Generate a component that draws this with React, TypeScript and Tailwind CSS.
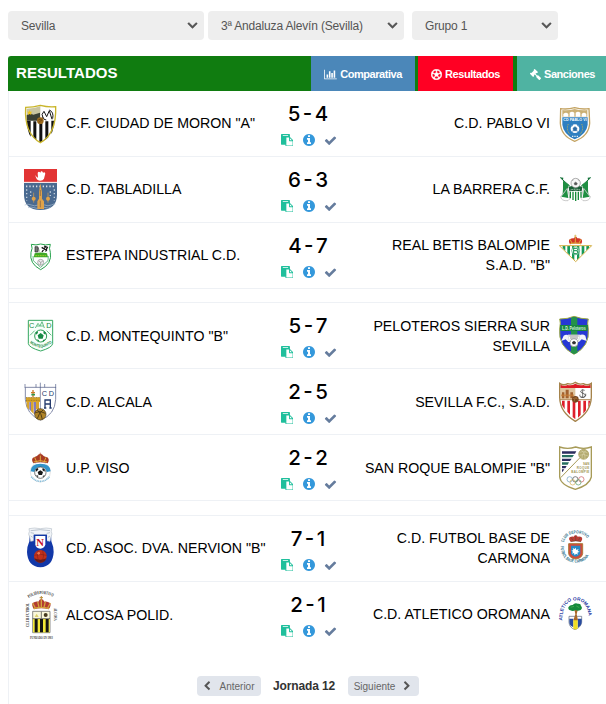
import React from 'react';
import { FaGavel, FaRegFutbol, FaChevronDown } from 'react-icons/fa';

function CrestBox({ viewBox, children }: { viewBox: string; children: React.ReactNode }) {
  return (
    <svg viewBox={viewBox} className="w-10 h-12 shrink-0 overflow-visible">
      {children}
    </svg>
  );
}

function Moron() {
  return (
    <CrestBox viewBox="60 30 120 144">
      <path d="M77 52 Q100 52 121 46 Q144 52 167 50 Q170 130 121 158 Q72 130 77 52Z" fill="#fff" />
      <path d="M81 92h11v48q-10-14-11-48zM100 94h9v56l-9-7zM118 96h9v60h-9zM136 94h9v48l-9 8zM154 92h8q-1 26-8 40z" fill="#111" />
      <path d="M80 56q22 0 41-7v42H80z" fill="#c9c4a0" />
      <path d="M80 76l10-6 10 4 20-6v24H80z" fill="#3b4034" />
      <path d="M89 60l2 5 6 0-4 4 1 6-5-3-5 3 1-6-4-4 6 0z" fill="#f0c419" />
      <path d="M129 84q-7-12 3-20l8 16 8-18 8 26M148 60q14 6 10 26M139 90q-8 0-10-8" fill="none" stroke="#151515" strokeWidth="3" />
      <circle cx="121" cy="92" r="10" fill="#9b6a1d" />
      <path d="M115 90q6-6 12 2M116 98q6-6 9-8" stroke="#5f3d0d" strokeWidth="2" fill="none" />
      <path d="M77 52 Q100 52 121 46 Q144 52 167 50 Q170 130 121 158 Q72 130 77 52Z" fill="none" stroke="#c9b52a" strokeWidth="4" />
    </CrestBox>
  );
}

function Tabladilla() {
  return (
    <CrestBox viewBox="60 228 120 144">
      <path d="M72 279h99v35q0 45-50 46-49-1-49-46z" fill="#4a6a90" />
      <path d="M72 237h99v39H72z" fill="#e23434" />
      <path d="M72 277h99" stroke="#f7dede" strokeWidth="3" />
      <path d="M106 255q4 8 8 8l-1-14q3-7 8-1l2-4q5-2 6 4l5-1q4 3 0 11l-2 8q-3 6-12 6-12 0-14-17z" fill="#fff" />
      <path d="M78 289h86" stroke="#d5dce4" strokeWidth="5" strokeDasharray="4 6" />
      <path d="M80 298v34M163 298v34M92 304v14M151 304v14" stroke="#c4cfda" strokeWidth="4" strokeDasharray="4 7" />
      <path d="M74 345q10-5 20 0t20 0 20 0 20 0 12-3M84 353q9-4 18 0t18 0 18 0 14-2" stroke="#a9bdd0" strokeWidth="2" fill="none" />
      <path d="M121 280l5 26v20l6 8v23h-20v-23l5-8v-20z" fill="#dfa24a" />
      <path d="M121 300v18M121 332v20" stroke="#795f45" strokeWidth="2" />
      <circle cx="101" cy="326" r="6" fill="#dfa24a" />
      <circle cx="144" cy="326" r="6" fill="#dfa24a" />
      <path d="M101 308v30M144 308v30" stroke="#dfa24a" strokeWidth="2" />
    </CrestBox>
  );
}

function Estepa() {
  return (
    <CrestBox viewBox="60 426 120 144">
      <path d="M94 463q14 4 28-1 14 5 29 1-5 12 0 24 6 34-29 52-35-18-29-52 6-12 1-24z" fill="#fff" stroke="#26a24b" strokeWidth="3" />
      <path d="M104 490q18-5 37 0l3 12h-43z" fill="#3faa27" />
      <path d="M99 498l1 14 22 20 22-20 1-14" fill="none" stroke="#1e9b50" strokeWidth="2" />
      <path d="M105 470h8v16h-8zM115 472l2 13" stroke="#222" strokeWidth="2" fill="#777" />
      <path d="M126 486l12-18M125 472l16 10M132 468l10 4-6 12" stroke="#171717" strokeWidth="4" fill="none" />
      <path d="M106 497h32" stroke="#d0d931" strokeWidth="2" strokeDasharray="5 2" />
      <circle cx="122" cy="517" r="9" fill="#eee" stroke="#8a8a8a" strokeWidth="2" />
      <path d="M117 513l5 4 6-3M122 517v8" stroke="#888" strokeWidth="2" fill="none" />
    </CrestBox>
  );
}

function Montequinto() {
  return (
    <CrestBox viewBox="60 36 120 144">
      <path d="M85 61h73v70q-2 12-36 22-35-10-37-22z" fill="#f7fffa" stroke="#36a861" strokeWidth="3" />
      <text x="87" y="85" fontSize="22" fontFamily="Liberation Sans, sans-serif" fill="#168a43">C</text>
      <text x="139" y="85" fontSize="22" fontFamily="Liberation Sans, sans-serif" fill="#168a43">D</text>
      <path d="M106 84l8-14 6 8 6-13 7 19M110 78h20M90 106l14-14M154 106l-14-14" stroke="#63bd84" strokeWidth="3" fill="none" />
      <circle cx="122" cy="108" r="18" fill="#fff" stroke="#2d9d55" strokeWidth="3" />
      <path d="M122 99l9 7-3 10h-12l-3-10zM106 98l7-5 1 6-6 5zM131 93l7 6-2 5-6-4zM109 118l8 2-1 5zM128 120l8-2-6 7z" fill="#168b44" />
      <path id="montequinto-band" d="M89 128q33 28 67 0" fill="none" />
      <text fontSize="12" fontWeight="bold" fontFamily="Liberation Sans, sans-serif" fill="#168a43">
        <textPath href="#montequinto-band" textLength="74" lengthAdjust="spacingAndGlyphs">MONTEQUINTO</textPath>
      </text>
    </CrestBox>
  );
}

function Alcala() {
  return (
    <CrestBox viewBox="60 234 120 144">
      <path d="M76 262h91v36q-2 46-45 62-43-16-46-62z" fill="#fff" stroke="#6a7497" strokeWidth="2.5" />
      <path d="M75 252v12M108 252v10M121 248v80M134 252v10M167 252v12" stroke="#4e5c86" strokeWidth="2" />
      <path d="M78 292h42v14H78z" fill="#d7a329" />
      <path d="M78 293h42M78 301h42" stroke="#856824" strokeWidth="2" strokeDasharray="3 2" />
      <path d="M80 306h8v24l-8-9zM93 306h8v36l-8-8zM108 306h9v22h-9z" fill="#d8a52e" />
      <path d="M88 306h5v28l-5-6zM101 306h7v36l-6 0z" fill="#817abf" />
      <path d="M99 270v22M93 278h12" stroke="#cc7a2c" strokeWidth="4" />
      <path d="M94 284h11" stroke="#31964c" strokeWidth="5" />
      <text x="125" y="287" fontSize="22" fontFamily="Liberation Sans, sans-serif" fill="#253b6e" textLength="37">CD</text>
      <path d="M135 324v-24h16v24M135 312h16M132 324h7M148 324h7" fill="none" stroke="#253b6e" strokeWidth="4" />
      <circle cx="121" cy="343" r="17" fill="#b08427" stroke="#483815" strokeWidth="2" />
      <path d="M106 338q15-8 30 2M112 330q14 12 15 28M130 329q-14 10-18 27" fill="none" stroke="#3e3013" strokeWidth="2.5" />
    </CrestBox>
  );
}

function Viso() {
  return (
    <CrestBox viewBox="60 432 120 144">
      <circle cx="121" cy="516" r="30" fill="#fff" stroke="#d4d4d4" strokeWidth="2" />
      <path d="M92 514q0-22 29-23 31 1 31 23l-12 2q-3-15-19-15-15 0-18 15z" fill="#3293c9" />
      <path d="M100 490q-7-12-1-17 10-4 12-5 4-6 10-6t10 6q4 3 11 4 8 6 1 18-22-7-43 0z" fill="#a83b24" />
      <path d="M101 486q20-8 40 0M104 472l6 14M121 466v19M138 472l-6 14" fill="none" stroke="#dfac3c" strokeWidth="3" />
      <path d="M121 458v10M117 463h8" stroke="#b04c35" strokeWidth="2" />
      <circle cx="121" cy="518" r="17" fill="#fff" stroke="#333" strokeWidth="2" />
      <path d="M121 511l8 5-3 9h-10l-3-9zM107 508l7-4 1 5-7 6zM128 504l7 5-2 6-6-5zM108 525l7 2-1 5zM128 528l7-3-6 7z" fill="#171717" />
      <path d="M94 530q10 13 27 14 18-1 27-14" fill="none" stroke="#87bfdd" strokeWidth="5" strokeDasharray="3 2" />
    </CrestBox>
  );
}

function Nervion() {
  return (
    <CrestBox viewBox="60 75 120 144">
      <path d="M89 100h64l1 24q7 16 7 32-2 44-40 46-38-2-40-46 0-16 7-32z" fill="#1238a8" />
      <path d="M87 86q16-4 34 0 18-4 34 0-3 8 1 16-4 10-6 22l-10-2v-18h-38v18l-10 2q-2-12-6-22 4-8 1-16z" fill="#f1f4f8" stroke="#b9c2cc" strokeWidth="2" />
      <path d="M92 92q28-6 58 0M92 98l10 2M150 98l-10 2M92 108l6 4M150 108l-6 4" fill="none" stroke="#9fabb8" strokeWidth="2" />
      <path d="M101 104h40v30q-3 16-20 18-18-2-20-18z" fill="#1238a8" />
      <path d="M106 108h30v26q-3 10-15 12-13-2-15-12z" fill="#fff" />
      <text x="109" y="137" fontSize="32" fontWeight="bold" fontFamily="Liberation Serif, serif" fill="#c4122c">N</text>
      <circle cx="121" cy="169" r="19" fill="#c0311c" />
      <path d="M103 175q19 8 36 0-4 13-18 13-13 0-18-13z" fill="#651d1b" />
      <path d="M103 166q18-6 37 0M114 151q-5 18 3 36M128 151q6 18-2 36" fill="none" stroke="#7d1e16" strokeWidth="1.5" />
      <circle cx="116" cy="160" r="4" fill="#ef7950" />
    </CrestBox>
  );
}

function Alcosa() {
  return (
    <CrestBox viewBox="60 273 120 144">
      <path id="alcosa-top" d="M86 294q36-24 76-2" fill="none" />
      <g fontFamily="Liberation Serif, serif" fontWeight="bold" fill="#333" fontSize="14">
        <text>
          <textPath href="#alcosa-top" textLength="77" lengthAdjust="spacingAndGlyphs">POLIDEPORTIVO</textPath>
        </text>
        <text transform="translate(88 381) rotate(-90)" textLength="72" lengthAdjust="spacingAndGlyphs">CLUB FUTBOL</text>
        <text transform="translate(161 324) rotate(90)" textLength="38" lengthAdjust="spacingAndGlyphs">ALCOSA</text>
        <text x="90" y="416" fontSize="10" textLength="68" lengthAdjust="spacingAndGlyphs">FUNDADO EN 1983</text>
      </g>
      <path d="M102 328q-8-12-4-19 8-6 17-4 3-8 9-8t9 8q9-2 17 4 5 7-4 19-22-6-44 0z" fill="#b33b31" />
      <path d="M101 326q23-8 46 0M98 309l8 15M113 305l4 17M124 298v24M136 305l-4 17M151 309l-8 15" fill="none" stroke="#d4a53e" strokeWidth="4" />
      <path d="M124 288v12M119 293h10" stroke="#bb8d37" strokeWidth="3" />
      <path d="M98 334h52v64H98z" fill="#faf8db" stroke="#555" strokeWidth="2" />
      <path d="M99 357h50v40H99z" fill="#f3e937" />
      <path d="M104 357h9v40h-9zM120 357h9v40h-9zM137 357h9v40h-9z" fill="#151515" />
      <path d="M124 335v20M98 356h52" stroke="#333" strokeWidth="2" />
      <circle cx="137" cy="345" r="6" fill="#453a20" />
      <path d="M104 351l6-10 6 10z" fill="#ddd06e" />
    </CrestBox>
  );
}

function PabloVI() {
  return (
    <CrestBox viewBox="297 30 120 144">
      <path d="M314 56q20 3 42-3 22 6 43 3l2 44q-2 38-45 54-41-16-43-54z" fill="#fff" stroke="#c4a464" strokeWidth="4" />
      <path d="M319 82h76v22q-3 28-39 44-34-16-37-44z" fill="#2e7fc1" />
      <path d="M319 60q18 2 37-3 19 5 38 3v20h-75z" fill="#cbb075" />
      <path d="M322 80v-8q8-8 15 0v8zM341 80v-12q7-5 14 0v12zM359 80v-12q7-5 14 0v12zM377 80v-8q7-8 14 0v8z" fill="#fff" />
      <text x="322" y="94" fontSize="13" fontWeight="bold" fontFamily="Liberation Sans, sans-serif" fill="#fff" textLength="70" lengthAdjust="spacingAndGlyphs">CD PABLO VI</text>
      <circle cx="357" cy="116" r="13" fill="#fff" />
      <path d="M357 110l6 5-2 7h-8l-2-7zM346 109l5-3M368 109l-5-3M348 124l5-2M366 124l-5-2" fill="#2d6ba4" stroke="#2d6ba4" strokeWidth="2" />
      <path d="M337 102q-8 18 6 32M377 102q8 18-6 32" stroke="#b7ae5c" strokeWidth="3" strokeDasharray="3 2" fill="none" />
      <path d="M348 139h18" stroke="#e5eef4" strokeWidth="4" strokeDasharray="3 2" />
    </CrestBox>
  );
}

function Barrera() {
  return (
    <CrestBox viewBox="297 228 120 144">
      <path d="M313 263l30 27M404 263l-30 27" stroke="#17733c" strokeWidth="3" />
      <path d="M312 262l10 1-1 8zM405 262l-10 1 1 8z" fill="#17733c" />
      <path d="M321 272l18 12-6 22-14 18q3-28 2-52zM396 272l-18 12 6 22 14 18q-3-28-2-52z" fill="#1f8f42" />
      <path d="M314 320l20-26 8 32-6 6q-20 2-22-12zM403 320l-20-26-8 32 6 6q20 2 22-12z" fill="#fff" stroke="#999" strokeWidth="1.5" />
      <path d="M316 320l17-22 4 26zM401 320l-17-22-4 26z" fill="#1f8f42" />
      <path d="M340 298q19-8 38 0l-3 26q-6 9-17 10-12-1-16-10z" fill="#fff" />
      <path d="M343 305v20M351 305v25M359 305v28M367 305v25M375 305v18" stroke="#168a39" strokeWidth="4" />
      <path d="M338 291q20-8 41 0l-2 13q-18-4-37 0z" fill="#195f36" />
      <path d="M344 300q14-5 28 0" stroke="#d2ead8" strokeWidth="3" fill="none" strokeDasharray="3 2" />
      <circle cx="359" cy="279" r="14" fill="#f7f7f7" stroke="#8b8b8b" strokeWidth="2" />
      <path d="M359 276l5 4-2 5h-6l-2-5zM348 272l5-3M370 272l-5-3" fill="#555" stroke="#777" strokeWidth="1.5" />
    </CrestBox>
  );
}

function Betis() {
  return (
    <CrestBox viewBox="297 426 120 144">
      <path d="M310 467h97l-48 48z" fill="#fff" />
      <path d="M320 468h8v14l-8-8zM334 468h8v28l-8-8zM348 468h7v42l-7-7zM363 468h7v35l-7 8zM377 468h8v20l-8 8zM391 468h8v7l-8 7z" fill="#169a58" />
      <path d="M310 467h97l-48 48z" fill="none" stroke="#d2b046" strokeWidth="3" />
      <path d="M342 463q-6-9-1-15 8-5 13-3 1-5 5-5t5 5q6-2 12 3 5 6-1 15-17-5-33 0z" fill="#d23528" />
      <path d="M343 461q15-5 32 0M342 448l6 11M358 442v16M375 448l-6 11" fill="none" stroke="#ddb03e" strokeWidth="3" />
      <path d="M358 434v8M354 438h8" stroke="#d8ab3b" strokeWidth="2" />
      <circle cx="359" cy="482" r="12" fill="#fff" stroke="#249b61" strokeWidth="2" />
      <path d="M353 474v17M353 475h9q6 4 0 7h-9M362 482q7 5 0 9h-9M366 473v18" fill="none" stroke="#149250" strokeWidth="3" />
    </CrestBox>
  );
}

function Peloteros() {
  return (
    <CrestBox viewBox="297 36 120 144">
      <path d="M311 57q25 0 43-8 22 8 43 8-4 10 0 30 5 52-43 76-48-24-43-76 4-20 0-30z" fill="#2638d5" stroke="#9eac43" strokeWidth="3" />
      <path d="M345 53l9-3 10 3v106l-10 3-9-4z" fill="#24924a" />
      <path d="M312 75h84l-2 18h-80z" fill="#188641" />
      <text x="318" y="90" fontSize="14" fontWeight="bold" fontFamily="Liberation Sans, sans-serif" fill="#dcf3df" textLength="71" lengthAdjust="spacingAndGlyphs">L.D. Peloteros</text>
      <path d="M323 107q8-6 16 0l31-1q10-5 18 1l4 16-15-5-8 8h-32l-8-8-13 5z" fill="#f3f4fa" />
      <path d="M336 104h36l-5 20h-27z" fill="#fff" stroke="#a0a8ae" strokeWidth="1" />
      <path d="M340 108h28M342 114h24" stroke="#555" strokeWidth="2" />
      <circle cx="354" cy="128" r="12" fill="#fff" stroke="#888" strokeWidth="2" />
      <path d="M354 122l6 5-2 6h-8l-2-6z" fill="#333" />
    </CrestBox>
  );
}

function Sevilla() {
  return (
    <CrestBox viewBox="297 234 120 144">
      <path d="M311 250q12 8 24 1 12 4 23-4 12 8 24 4 12 7 24-1v42q-2 46-48 72-46-26-47-72z" fill="#fff" />
      <path d="M313 254q12 6 22 1 12 3 23-4 12 7 24 4 11 5 22-1v10H313z" fill="#dc1b25" />
      <path d="M313 264h45v34h-45z" fill="#dfc49d" />
      <path d="M318 295v-18h7v18zM329 295v-26h9v26zM343 295v-18h8v18z" fill="#a2612f" />
      <path d="M316 286h38" stroke="#ca7e35" strokeWidth="5" strokeDasharray="4 2" />
      <path d="M386 271q-9-5-12 2-1 5 7 7t7 8q-5 8-14 3M380 269v22M372 284q-3 8 8 8t9-11" fill="none" stroke="#333" strokeWidth="2" />
      <path d="M318 302h8v26l-8-13zM334 302h8v42l-8-9zM350 302h8v56l-8-7zM366 302h8v43l-8 8zM382 302h8v29l-8 10zM397 302h6l-6 22z" fill="#de1f2b" />
      <path d="M312 299h93" stroke="#b08a58" strokeWidth="3" />
      <circle cx="358" cy="298" r="10" fill="#75451d" />
      <path d="M350 296q8-5 15 1M354 305q1-10 8-14" fill="none" stroke="#b57a3e" strokeWidth="2" />
      <path d="M311 250q12 8 24 1 12 4 23-4 12 8 24 4 12 7 24-1v42q-2 46-48 72-46-26-47-72z" fill="none" stroke="#a5834b" strokeWidth="4" />
    </CrestBox>
  );
}

function SanRoque() {
  return (
    <CrestBox viewBox="297 432 120 144">
      <path d="M311 441q24 8 48 0 24 8 47 0v90q-5 24-48 37-44-13-47-37z" fill="#fff" stroke="#a79b58" strokeWidth="4" />
      <path d="M318 454h43l-4 7h-39zM318 476h29l-5 7h-24zM318 498h14l-4 7h-10z" fill="#2b2d5e" />
      <path d="M318 465h36l-5 7h-31zM318 487h21l-4 7h-17z" fill="#26705f" />
      <path d="M318 508h7l-5 7h-2z" fill="#2b2d5e" />
      <path d="M314 533l58-60" stroke="#a79b58" strokeWidth="3" />
      <circle cx="383" cy="463" r="15" fill="#b4ab70" stroke="#a79b58" strokeWidth="2" />
      <path d="M371 457q12-7 24 2M370 466q12-6 27 2M376 451q12 8 11 26M392 451q-14 8-14 24" fill="none" stroke="#ded9b5" strokeWidth="1.5" />
      <g fontSize="9" fontWeight="bold" fontFamily="Liberation Sans, sans-serif" fill="#a29653" textAnchor="end">
        <text x="400" y="496">SAN</text>
        <text x="400" y="508" textLength="38">ROQUE</text>
        <text x="400" y="520" textLength="54">BALOMPIE</text>
      </g>
      <g fill="none" strokeWidth="2">
        <circle cx="341" cy="538" r="8" stroke="#6b9fbd" />
        <circle cx="358" cy="538" r="8" stroke="#444" />
        <circle cx="376" cy="538" r="8" stroke="#cc5358" />
        <circle cx="350" cy="547" r="8" stroke="#d6ae4b" />
        <circle cx="367" cy="547" r="8" stroke="#4c9a62" />
      </g>
    </CrestBox>
  );
}

function Carmona() {
  return (
    <CrestBox viewBox="297 75 120 144">
      <path id="carmona-top" d="M323 128q8-28 38-28 30 1 37 26" fill="none" />
      <path id="carmona-bottom" d="M314 139q2 48 47 49 42-2 43-51" fill="none" />
      <g fontSize="13" fontWeight="bold" fontFamily="Liberation Sans, sans-serif" fill="#2c7088">
        <text>
          <textPath href="#carmona-top" textLength="88" lengthAdjust="spacingAndGlyphs">CLUB DEPORTIVO</textPath>
        </text>
        <text>
          <textPath href="#carmona-bottom" textLength="122" lengthAdjust="spacingAndGlyphs">FUTBOL BASE CARMONA</textPath>
        </text>
      </g>
      <path d="M344 125q-8-8-3-13 7-4 12-2 2-4 6-4t6 4q7-2 12 2 4 5-2 13-15-4-31 0z" fill="#bd3c35" />
      <path d="M344 125q15-5 31 0M359 107v16M345 112l6 9M373 112l-6 9" fill="none" stroke="#6d4a30" strokeWidth="2" />
      <path d="M338 131h42v30q-3 14-21 16-18-2-21-16z" fill="#d04b3b" stroke="#ad7a38" strokeWidth="3" />
      <path d="M345 137h28v23q-3 9-14 10-12-1-14-10z" fill="#2789c5" />
      <path d="M359 143l2 7 7-3-3 6 6 2-7 3 2 6-6-3-4 5-2-7-6 2 3-6-5-3 6-2-2-6 6 3z" fill="#fff" />
    </CrestBox>
  );
}

function Oromana() {
  return (
    <CrestBox viewBox="297 273 120 144">
      <path id="oromana-arch" d="M319 362q0-60 39-61 40 1 41 61" fill="none" />
      <text fontSize="14" fontWeight="bold" fontFamily="Liberation Sans, sans-serif" fill="#1c35a0">
        <textPath href="#oromana-arch" textLength="150" lengthAdjust="spacingAndGlyphs">ATLETICO OROMANA</textPath>
      </text>
      <path d="M339 349h38v18q-3 16-20 22-17-6-18-22z" fill="#fff" stroke="#536078" strokeWidth="2" />
      <path d="M340 356h12v26q-12-5-12-15zM365 356h12v11q-1 11-12 16z" fill="#284b9f" />
      <path d="M352 360h13v26l-7 3-6-3z" fill="#f0df24" />
      <path d="M355 328l3 15-6 18h14l-4-18 4-16z" fill="#aa6a29" />
      <path d="M337 322q5-8 13-7 6-8 16-4 9-1 9 7 6 6-1 12-9 4-15 0-8 5-16 1-7-1-6-9z" fill="#168a3c" />
      <path d="M344 322l10-3M361 318l9 5" stroke="#51b557" strokeWidth="2" />
    </CrestBox>
  );
}

const matches = [
  { home: 'C.F. CIUDAD DE MORON "A"', away: 'C.D. PABLO VI', score: '5 - 4', homeCrest: <Moron />, awayCrest: <PabloVI /> },
  { home: 'C.D. TABLADILLA', away: 'LA BARRERA C.F.', score: '6 - 3', homeCrest: <Tabladilla />, awayCrest: <Barrera /> },
  { home: 'ESTEPA INDUSTRIAL C.D.', away: 'REAL BETIS BALOMPIE S.A.D. "B"', score: '4 - 7', homeCrest: <Estepa />, awayCrest: <Betis /> },
  { home: 'C.D. MONTEQUINTO "B"', away: 'PELOTEROS SIERRA SUR SEVILLA', score: '5 - 7', homeCrest: <Montequinto />, awayCrest: <Peloteros /> },
  { home: 'C.D. ALCALA', away: 'SEVILLA F.C., S.A.D.', score: '2 - 5', homeCrest: <Alcala />, awayCrest: <Sevilla /> },
  { home: 'U.P. VISO', away: 'SAN ROQUE BALOMPIE "B"', score: '2 - 2', homeCrest: <Viso />, awayCrest: <SanRoque /> },
  { home: 'CD. ASOC. DVA. NERVION "B"', away: 'C.D. FUTBOL BASE DE CARMONA', score: '7 - 1', homeCrest: <Nervion />, awayCrest: <Carmona /> },
  { home: 'ALCOSA POLID.', away: 'C.D. ATLETICO OROMANA', score: '2 - 1', homeCrest: <Alcosa />, awayCrest: <Oromana /> },
];

function MatchActions() {
  return (
    <div className="flex items-center justify-center gap-[9.5px] mt-[7px] pl-0.5 h-3.5">
      <svg viewBox="0 0 1792 1792" className="size-[12.5px] fill-[#1fbf9c]">
        <path d="M768 1664h896v-640h-416q-40 0-68-28t-28-68v-416h-384v1152zm256-1440v-64q0-13-9.5-22.5t-22.5-9.5h-704q-13 0-22.5 9.5t-9.5 22.5v64q0 13 9.5 22.5t22.5 9.5h704q13 0 22.5-9.5t9.5-22.5zm256 672h299l-299-299v299zm512 128v672q0 40-28 68t-68 28h-960q-40 0-68-28t-28-68v-160h-544q-40 0-68-28t-28-68v-1344q0-40 28-68t68-28h1088q40 0 68 28t28 68v328q21 13 36 28l408 408q28 28 48 76t20 88z" />
      </svg>
      <svg viewBox="128 128 1536 1536" className="size-3 fill-[#3498db]">
        <path d="M1152 1376v-160q0-14-9-23t-23-9h-96v-512q0-14-9-23t-23-9h-320q-14 0-23 9t-9 23v160q0 14 9 23t23 9h96v320h-96q-14 0-23 9t-9 23v160q0 14 9 23t23 9h448q14 0 23-9t9-23zm-128-896v-160q0-14-9-23t-23-9h-192q-14 0-23 9t-9 23v160q0 14 9 23t23 9h192q14 0 23-9t9-23zm640 416q0 209-103 385.5t-279.5 279.5-385.5 103-385.5-103-279.5-279.5-103-385.5 103-385.5 279.5-279.5 385.5-103 385.5 103 279.5 279.5 103 385.5z" />
      </svg>
      <svg viewBox="0 0 1792 1792" className="size-[13px] fill-[#657c9d]">
        <path d="M1671 566q0 40-28 68l-724 724-136 136q-28 28-68 28t-68-28l-136-136-362-362q-28-28-28-68t28-68l136-136q28-28 68-28t68 28l294 295 656-657q28-28 68-28t68 28l136 136q28 28 28 68z" />
      </svg>
    </div>
  );
}

function FilterSelect({ label, className }: { label: string; className: string }) {
  return (
    <div className={`h-[29px] flex items-center justify-between rounded bg-[#eeeeee] text-[#555] text-xs tracking-[-0.17px] ${className}`}>
      <span>{label}</span>
      <FaChevronDown className="size-[11px] stroke-current stroke-[20px]" />
    </div>
  );
}

export default function App() {
  return (
    <div className="w-[606px] h-[704px] overflow-hidden bg-white font-['Liberation_Sans',Arial,sans-serif]">
      <div className="flex pt-[11px] pl-2">
        <FilterSelect label="Sevilla" className="w-[196px] pl-[13px] pr-1.5" />
        <FilterSelect label="3ª Andaluza Alevín (Sevilla)" className="w-[196px] ml-1 pl-[13px] pr-1.5" />
        <FilterSelect label="Grupo 1" className="w-[146px] ml-2 pl-[13px] pr-1.5" />
      </div>

      <div className="ml-2 mt-4 border-l border-[#eef1f5] h-[648px]">
        <div className="-ml-px h-[35px] flex bg-[#107c10] rounded-tl-[3px] text-white font-bold text-[11px] tracking-[-0.45px]">
          <h1 className="w-[303px] pl-2 text-[15px] leading-[34px] tracking-[0.05px]">RESULTADOS</h1>
          <a className="w-[104px] pt-px flex items-center justify-center gap-[3px] bg-[#4b87b9]">
            <svg viewBox="0 0 2048 1792" className="w-[13px] h-[11px] fill-white">
              <path d="M640 896v512h-256v-512h256zm384-512v1024h-256v-1024h256zm1024 1152v128h-2048v-1536h128v1408h1920zm-640-896v768h-256v-768h256zm384-384v1152h-256v-1152h256z" />
            </svg>
            Comparativa
          </a>
          <a className="w-[95px] pt-px ml-[3px] flex items-center justify-center gap-[3px] bg-[#ff0023]">
            <FaRegFutbol className="size-[11px] stroke-white stroke-[20px]" />
            Resultados
          </a>
          <a className="w-[89px] pt-px ml-1 flex items-center pl-[13px] gap-[3px] bg-[#4fb3a2]">
            <FaGavel className="size-[11px] -scale-x-100" />
            Sanciones
          </a>
        </div>

        {matches.map((match, i) => (
          <React.Fragment key={match.home}>
            {i === 3 && <div className="h-3.5 border-b border-[#eef1f5]" />}
            {i === 6 && <div className="h-[15px] border-b border-[#eef1f5]" />}
            <div className={`h-[66px] flex ${i < 7 ? 'border-b border-[#eef1f5]' : ''}`}>
              <div className="w-[256px] flex items-center pl-[11px] gap-1.5">
                {match.homeCrest}
                <span className={`text-[14.2px] leading-5 whitespace-nowrap ${i >= 3 && i < 6 ? 'pt-px' : 'pb-px'}`}>{match.home}</span>
              </div>
              <div className="w-[86px] pt-[11px] text-center">
                <div className="font-['Inter',sans-serif] font-medium text-[20.5px] leading-6 [word-spacing:-3px]">{match.score}</div>
                <MatchActions />
              </div>
              <div className="w-[255px] flex items-center justify-end pr-[11px] gap-[5px]">
                <span className={`w-[190px] text-right text-[14.2px] leading-[20.4px] ${i >= 3 && i < 6 ? 'pt-px' : 'pb-px'}`}>{match.away}</span>
                {match.awayCrest}
              </div>
            </div>
          </React.Fragment>
        ))}

        <div className="flex items-center justify-center mt-7 h-5 text-[10px] text-[#666]">
          <button className="w-16 h-5 flex items-center justify-center gap-[7px] rounded-sm bg-[#e1e5ec]">
            <svg viewBox="0 0 1792 1792" className="size-2.5 fill-[#555]">
              <path d="M1427 301l-531 531 531 531q19 19 19 45t-19 45l-166 166q-19 19-45 19t-45-19l-742-742q-19-19-19-45t19-45l742-742q19-19 45-19t45 19l166 166q19 19 19 45t-19 45z" />
            </svg>
            Anterior
          </button>
          <span className="w-[87px] text-center text-xs font-bold text-[#333] tracking-[-0.15px]">Jornada 12</span>
          <button className="w-[71px] h-5 flex items-center justify-center gap-[7px] rounded-sm bg-[#e1e5ec]">
            Siguiente
            <svg viewBox="0 0 1792 1792" className="size-2.5 fill-[#555]">
              <path d="M1363 877l-742 742q-19 19-45 19t-45-19l-166-166q-19-19-19-45t19-45l531-531-531-531q-19-19-19-45t19-45l166-166q19-19 45-19t45 19l742 742q19 19 19 45t-19 45z" />
            </svg>
          </button>
        </div>
      </div>
    </div>
  );
}
